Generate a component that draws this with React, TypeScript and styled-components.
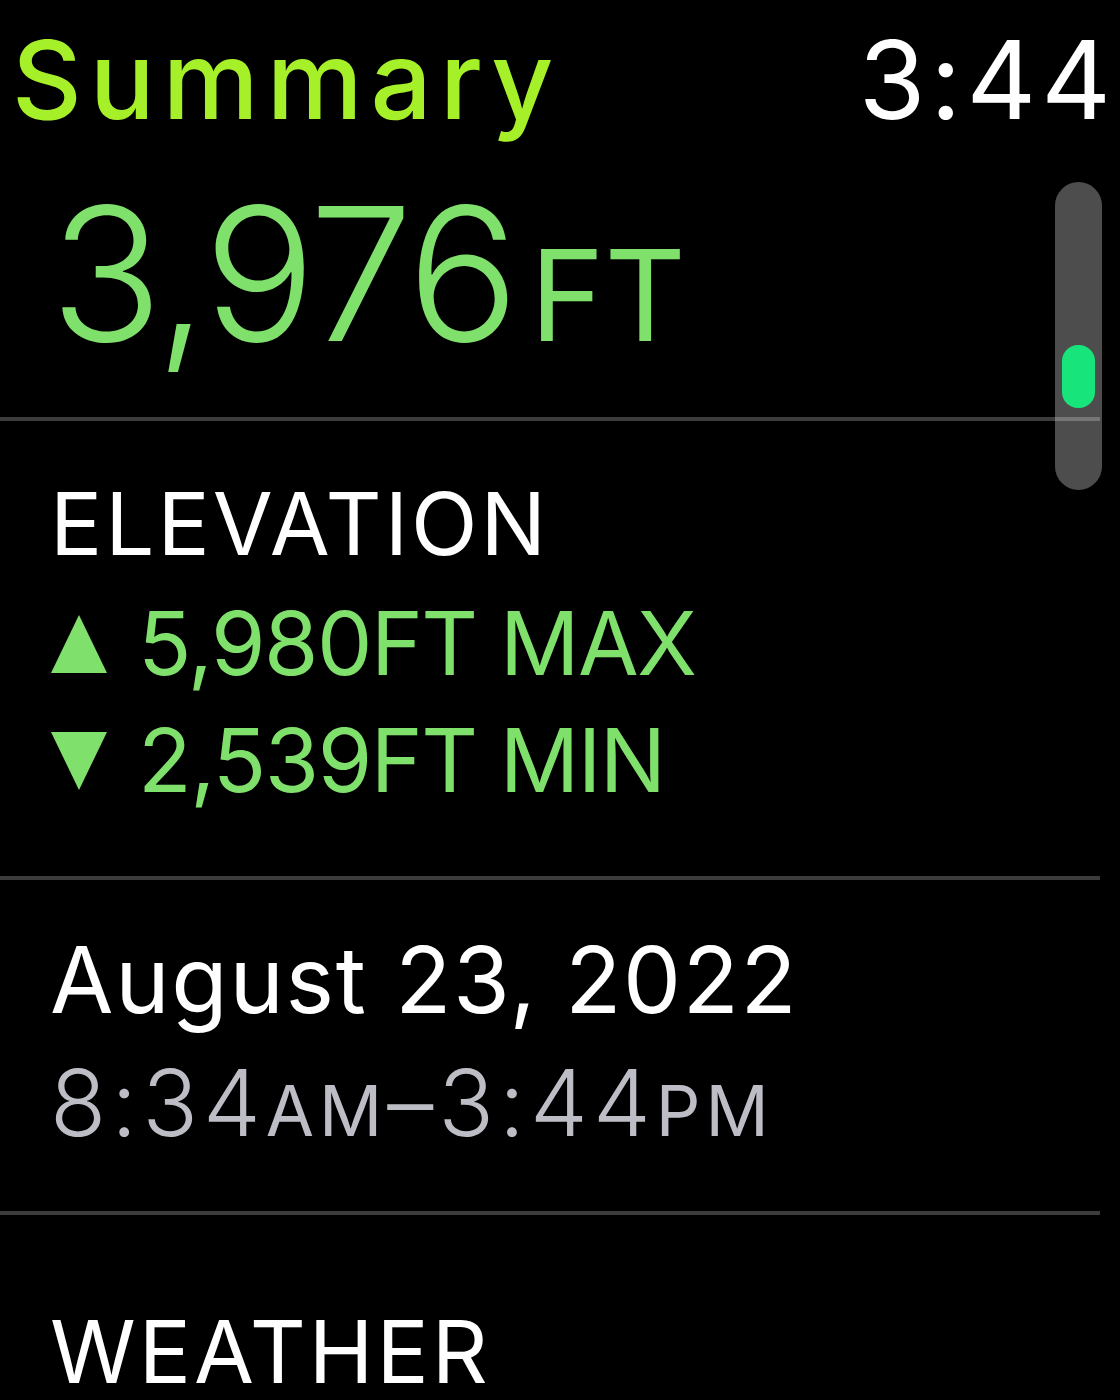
import styled, { createGlobalStyle } from "styled-components";

const Global = createGlobalStyle`
  html, body {
    margin: 0;
    padding: 0;
    background: #000;
  }
  body {
    font-family: Inter, "Liberation Sans", sans-serif;
  }
`;

const GREEN = "#80e06c";

export default function App() {
  return (
    <>
      <Global />
      <Screen>
        <Header>
          <Title>Summary</Title>
          <Clock>3:44</Clock>
        </Header>

        <Body>
          <Big>
            3,976<Unit>FT</Unit>
          </Big>
          <Divider $gap={22} />

          <Section>
            <Label>ELEVATION</Label>
            <Stats>
              <StatRow>
                <Arrow dir="up" />
                5,980FT MAX
              </StatRow>
              <StatRow>
                <Arrow dir="down" />
                2,539FT MIN
              </StatRow>
            </Stats>
          </Section>
          <Divider $gap={57} />

          <Section $top={40}>
            <DateLine>August 23, 2022</DateLine>
            <TimeLine>
              8:34<Small>AM</Small>–3:44<Small>PM</Small>
            </TimeLine>
          </Section>
          <Divider $gap={37} />

          <Section $top={94}>
            <Label $lh={86}>WEATHER</Label>
          </Section>

          <ScrollTrack>
            <ScrollThumb />
          </ScrollTrack>
        </Body>
      </Screen>
    </>
  );
}

function Arrow({ dir }: { dir: "up" | "down" }) {
  return (
    <ArrowSvg viewBox="0 0 58 60">
      {dir === "up" ? (
        <path d="M29 1 L57 59 L1 59 Z" fill={GREEN} />
      ) : (
        <path d="M1 1 L57 1 L29 59 Z" fill={GREEN} />
      )}
    </ArrowSvg>
  );
}

const Screen = styled.div`
  width: 1120px;
  height: 1400px;
  overflow: hidden;
  background: #000;
  display: flex;
  flex-direction: column;
`;

const Header = styled.div`
  display: flex;
  justify-content: space-between;
  align-items: flex-start;
  padding: 15px 4px 0 12px;
  height: 132px;
`;

const Title = styled.div`
  font-size: 108px;
  line-height: 130px;
  font-weight: 500;
  letter-spacing: 8px;
  color: #a6f02a;
`;

const Clock = styled.div`
  font-size: 108px;
  line-height: 130px;
  font-weight: 400;
  letter-spacing: 5px;
  color: #fff;
`;

const Body = styled.div`
  position: relative;
  display: flex;
  flex-direction: column;
  width: 1100px;
`;

const Big = styled.div`
  margin-top: 27px;
  padding-left: 50px;
  font-size: 186px;
  line-height: 200px;
  font-weight: 300;
  color: ${GREEN};
  letter-spacing: -3px;
`;

const Unit = styled.span`
  font-size: 126px;
  font-weight: 400;
  letter-spacing: 0;
  margin-left: 14px;
`;

const Divider = styled.div<{ $gap?: number }>`
  height: 4px;
  background: #3c3c3c;
  margin-top: ${(p) => p.$gap ?? 40}px;
`;

const Section = styled.div<{ $top?: number }>`
  display: flex;
  flex-direction: column;
  padding-left: 50px;
  margin-top: ${(p) => p.$top ?? 46}px;
`;

const Label = styled.div<{ $lh?: number }>`
  font-size: 87px;
  line-height: ${(p) => p.$lh ?? 114}px;
  color: #fff;
  letter-spacing: 3px;
`;

const Stats = styled.div`
  display: flex;
  flex-direction: column;
  margin-top: 4px;
`;

const StatRow = styled.div`
  display: flex;
  align-items: center;
  gap: 30px;
  font-size: 88px;
  line-height: 117px;
  letter-spacing: -1.5px;
  color: ${GREEN};
`;

const ArrowSvg = styled.svg`
  width: 58px;
  height: 60px;
  flex: none;
`;

const DateLine = styled.div`
  font-size: 92px;
  line-height: 120px;
  color: #fff;
  letter-spacing: 1.7px;
`;

const TimeLine = styled.div`
  font-size: 92px;
  line-height: 126px;
  font-weight: 300;
  color: #bdbdc6;
  letter-spacing: 5px;
`;

const Small = styled.span`
  font-size: 70px;
  font-weight: 400;
`;

const ScrollTrack = styled.div`
  position: absolute;
  top: 35px;
  left: 1055px;
  width: 47px;
  height: 308px;
  border-radius: 24px;
  background: rgba(255, 255, 255, 0.3);
`;

const ScrollThumb = styled.div`
  margin: 163px 0 0 7px;
  width: 33px;
  height: 63px;
  border-radius: 16px;
  background: #18e47c;
`;
